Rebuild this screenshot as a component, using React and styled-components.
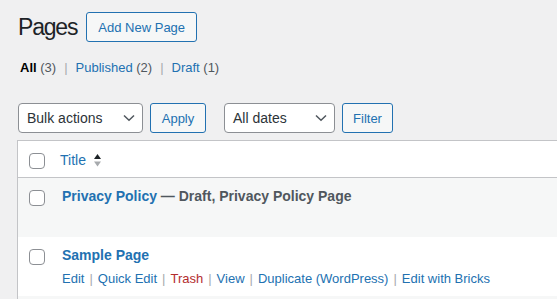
import React from "react";
import styled, { createGlobalStyle } from "styled-components";

const GlobalStyle = createGlobalStyle`
  html, body {
    margin: 0;
    padding: 0;
    background: #f0f0f1;
    font-family: "Liberation Sans", Arial, sans-serif;
    color: #3c434a;
    overflow: hidden;
  }
`;

const Wrap = styled.div`
  padding: 12px 0 0 18px;
  width: 600px;
`;

const Header = styled.div`
  display: flex;
  align-items: center;
  gap: 9px;
`;

const H1 = styled.h1`
  margin: 0;
  font-size: 23px;
  font-weight: 400;
  letter-spacing: -1.2px;
  color: #1d2327;
  line-height: 30px;
`;

const Button = styled.button`
  box-sizing: border-box;
  height: 30px;
  width: ${(p) => p.$w}px;
  padding: 0;
  border: 1px solid #2271b1;
  border-radius: 3px;
  background: #f6f7f7;
  color: #2271b1;
  font-family: inherit;
  font-size: 13px;
  line-height: 1;
`;

const SubSub = styled.ul`
  list-style: none;
  margin: 16px 0 0 2px;
  padding: 0;
  display: flex;
  font-size: 13px;
  line-height: 20px;
`;

const SubItem = styled.li`
  color: #50575e;
`;

const SubLink = styled.span`
  color: ${(p) => (p.$current ? "#000" : "#2271b1")};
  font-weight: ${(p) => (p.$current ? 600 : 400)};
`;

const Pipe = styled.span`
  color: #a7aaad;
  margin: 0 8px 0 8px;
`;

const Toolbar = styled.div`
  display: flex;
  align-items: center;
  margin-top: 25px;
  gap: 7px;
`;

const Select = styled.div`
  box-sizing: border-box;
  height: 30px;
  width: ${(p) => p.$w}px;
  margin-left: ${(p) => p.$ml || 0}px;
  border: 1px solid #8c8f94;
  border-radius: 4px;
  background: #fff;
  display: flex;
  align-items: center;
  justify-content: space-between;
  padding: 0 7px 0 8px;
  color: #2c3338;
  font-size: 14px;
`;

const Table = styled.div`
  margin: 7px 0 0 -1px;
  border: 1px solid #c3c4c7;
  border-right: none;
  background: #fff;
`;

const Row = styled.div`
  display: flex;
  align-items: flex-start;
  background: ${(p) => (p.$alt ? "#f6f7f7" : "#fff")};
  border-bottom: ${(p) => (p.$head ? "1px solid #c3c4c7" : "none")};
  height: ${(p) => p.$h}px;
  box-sizing: border-box;
`;

const CheckCell = styled.div`
  width: 40px;
  padding: ${(p) => (p.$head ? "12px" : "12px")} 0 0 11px;
  box-sizing: border-box;
  flex: none;
`;

const Check = styled.span`
  display: block;
  width: 16px;
  height: 16px;
  box-sizing: border-box;
  border: 1px solid #8c8f94;
  border-radius: 4px;
  background: #fff;
`;

const TitleCell = styled.div`
  padding: ${(p) => (p.$head ? "10px 0 0 2px" : "8px 0 0 4px")};
  flex: 1;
`;

const HeadTitle = styled.span`
  display: inline-flex;
  align-items: center;
  gap: 8px;
  color: #2271b1;
  font-size: 14px;
  line-height: 18px;
`;

const RowTitle = styled.div`
  font-size: 14px;
  font-weight: 700;
  line-height: 20px;
  color: #50575e;
`;

const TitleLink = styled.span`
  color: #2271b1;
`;

const Actions = styled.div`
  margin-top: 5px;
  font-size: 13px;
  line-height: 18px;
  color: #a7aaad;
  visibility: ${(p) => (p.$hidden ? "hidden" : "visible")};
  white-space: nowrap;
`;

const Action = styled.span`
  color: ${(p) => (p.$danger ? "#b32d2e" : "#2271b1")};
`;

const Sep = styled.span`
  margin: 0 5px;
`;

const Chevron = () => (
  <svg width="12" height="8" viewBox="0 0 12 8">
    <path d="M1 1.5 L6 6.3 L11 1.5" fill="none" stroke="#50575e" strokeWidth="1.5" />
  </svg>
);

const SortArrows = () => (
  <svg width="7" height="13" viewBox="0 0 7 13">
    <path d="M3.5 0 L7 5 L0 5 Z" fill="#1d2327" />
    <path d="M0 7.5 L7 7.5 L3.5 12.5 Z" fill="#a7aaad" />
  </svg>
);

const actions = ["Edit", "Quick Edit", "Trash", "View", "Duplicate (WordPress)", "Edit with Bricks"];

const RowActions = ({ hidden }) => (
  <Actions $hidden={hidden}>
    {actions.map((a, i) => (
      <React.Fragment key={a}>
        {i > 0 && <Sep>|</Sep>}
        <Action $danger={a === "Trash"}>{a}</Action>
      </React.Fragment>
    ))}
  </Actions>
);

export default function App() {
  return (
    <>
      <GlobalStyle />
      <Wrap>
        <Header>
          <H1>Pages</H1>
          <Button $w={111}>Add New Page</Button>
        </Header>
        <SubSub>
          <SubItem>
            <SubLink $current>All</SubLink> (3)<Pipe>|</Pipe>
          </SubItem>
          <SubItem>
            <SubLink>Published</SubLink> (2)<Pipe>|</Pipe>
          </SubItem>
          <SubItem>
            <SubLink>Draft</SubLink> (1)
          </SubItem>
        </SubSub>
        <Toolbar>
          <Select $w={125}>
            Bulk actions
            <Chevron />
          </Select>
          <Button $w={56}>Apply</Button>
          <Select $w={111} $ml={11}>
            All dates
            <Chevron />
          </Select>
          <Button $w={51}>Filter</Button>
        </Toolbar>
        <Table>
          <Row $head $h={37}>
            <CheckCell $head>
              <Check />
            </CheckCell>
            <TitleCell $head>
              <HeadTitle>
                Title
                <SortArrows />
              </HeadTitle>
            </TitleCell>
          </Row>
          <Row $alt $h={59}>
            <CheckCell>
              <Check />
            </CheckCell>
            <TitleCell>
              <RowTitle>
                <TitleLink>Privacy Policy</TitleLink> — Draft, Privacy Policy Page
              </RowTitle>
              <RowActions hidden />
            </TitleCell>
          </Row>
          <Row $h={59}>
            <CheckCell>
              <Check />
            </CheckCell>
            <TitleCell>
              <RowTitle>
                <TitleLink>Sample Page</TitleLink>
              </RowTitle>
              <RowActions />
            </TitleCell>
          </Row>
          <Row $alt $h={20} />
        </Table>
      </Wrap>
    </>
  );
}
